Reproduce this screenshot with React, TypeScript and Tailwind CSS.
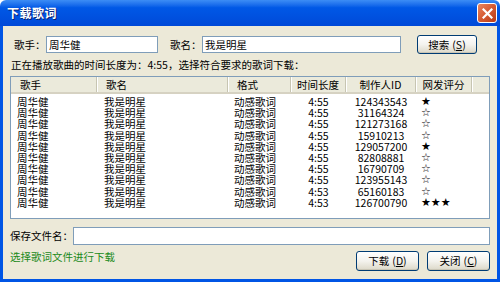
const rows = [
  { id: "124343543", time: "4:55", stars: "★" },
  { id: "31164324", time: "4:55", stars: "☆" },
  { id: "121273168", time: "4:55", stars: "☆" },
  { id: "15910213", time: "4:55", stars: "☆" },
  { id: "129057200", time: "4:55", stars: "★" },
  { id: "82808881", time: "4:55", stars: "☆" },
  { id: "16790709", time: "4:55", stars: "☆" },
  { id: "123955143", time: "4:55", stars: "☆" },
  { id: "65160183", time: "4:53", stars: "☆" },
  { id: "126700790", time: "4:53", stars: "★★★" },
];

const font = "font-['SimSun','Noto_Sans_CJK_SC',sans-serif]";

function XpButton({ label, hotkey, className }: { label: string; hotkey: string; className: string }) {
  return (
    <button
      className={`shrink-0 flex items-center justify-center rounded-[3px] border border-[#003C74] bg-gradient-to-b from-white via-[#F4F3EE] to-[#DCD8C8] text-[10.5px] text-black shadow-[inset_0_-1px_0_#C9C5B5] ${className}`}
    >
      {label}
      <span className="ml-[3px]">
        (<u>{hotkey}</u>)
      </span>
    </button>
  );
}

function HeaderCell({ children, w, center }: { children: string; w: string; center?: boolean }) {
  return (
    <div
      className={`${w} shrink-0 h-full flex items-center border-r border-[#C7C5B2] shadow-[1px_0_0_#fff] ${
        center ? "justify-center" : "pl-[9px]"
      }`}
    >
      {children}
    </div>
  );
}

export default function App() {
  return (
    <div className={`w-[500px] h-[282px] flex flex-col ${font} text-[10.5px] text-black whitespace-nowrap`}>
      <div className="h-[26px] shrink-0 rounded-t-[6px] bg-gradient-to-b from-[#3C8DF5] via-[#0058E6] via-30% to-[#0049D8] flex items-center justify-between pl-[7px] pr-[3px]">
        <span className="text-white font-bold text-[12px] tracking-[0.5px] [text-shadow:1px_1px_0_#0A1F6E]">
          下载歌词
        </span>
        <div className="w-[20px] h-[20px] rounded-[3px] border border-white bg-gradient-to-br from-[#E9865F] via-[#D55A32] to-[#B83A16] flex items-center justify-center">
          <svg width="11" height="11" viewBox="0 0 11 11">
            <path d="M1.5 1.5 L9.5 9.5 M9.5 1.5 L1.5 9.5" stroke="white" strokeWidth="2.2" strokeLinecap="square" />
          </svg>
        </div>
      </div>

      <div className="flex-1 flex flex-col bg-[#ECE9D8] border-x-[3px] border-b-[3px] border-[#0055E5] px-[7px] pt-[9px]">
        <div className="h-[19px] flex items-center pl-[4px]">
          <span className="w-[32px] shrink-0">歌手：</span>
          <div className="w-[112px] shrink-0 h-[17px] bg-white border border-[#7F9DB9] pl-[2px] flex items-center">周华健</div>
          <span className="ml-[12px] w-[32px] shrink-0">歌名：</span>
          <div className="w-[199px] shrink-0 h-[17px] bg-white border border-[#7F9DB9] pl-[2px] flex items-center">我是明星</div>
          <XpButton label="搜索" hotkey="S" className="ml-[16px] w-[60px] h-[19px]" />
        </div>

        <div className="mt-[3px] h-[15px] leading-[15px] pl-[1px]">
          正在播放歌曲的时间长度为：4:55，选择符合要求的歌词下载：
        </div>

        <div className="mt-[4px] h-[143px] bg-white border border-[#7F9DB9] flex flex-col overflow-hidden">
          <div className="h-[17px] shrink-0 flex bg-[#EBEADB] border-b-2 border-[#D6D2C2]">
            <HeaderCell w="w-[86px]">歌手</HeaderCell>
            <HeaderCell w="w-[131px]">歌名</HeaderCell>
            <HeaderCell w="w-[63px]">格式</HeaderCell>
            <HeaderCell w="w-[55px]" center>时间长度</HeaderCell>
            <HeaderCell w="w-[70px]" center>制作人ID</HeaderCell>
            <HeaderCell w="w-[56px]" center>网发评分</HeaderCell>
          </div>
          <div className="pt-[2px]">
            {rows.map((r, i) => (
              <div key={i} className="flex h-[11.2px] leading-[11.2px]">
                <div className="w-[86px] pl-[6px]">周华健</div>
                <div className="w-[131px] pl-[7px]">我是明星</div>
                <div className="w-[63px] pl-[6px]">动感歌词</div>
                <div className="w-[55px] text-center">{r.time}</div>
                <div className="w-[70px] text-center">{r.id}</div>
                <div className="w-[56px] pl-[5px] font-['DejaVu_Sans',sans-serif] text-[11px]">{r.stars}</div>
              </div>
            ))}
          </div>
        </div>

        <div className="mt-[8px] h-[18px] flex items-center">
          <span className="w-[63px] shrink-0">保存文件名：</span>
          <div className="flex-1 h-[18px] bg-white border border-[#7F9DB9]" />
        </div>

        <div className="mt-[6px] flex items-start">
          <span className="flex-1 leading-[12px] text-[#1A8A1A]">选择歌词文件进行下载</span>
          <XpButton label="下载" hotkey="D" className="w-[63px] h-[20px]" />
          <XpButton label="关闭" hotkey="C" className="ml-[8px] w-[63px] h-[20px]" />
        </div>
      </div>
    </div>
  );
}
